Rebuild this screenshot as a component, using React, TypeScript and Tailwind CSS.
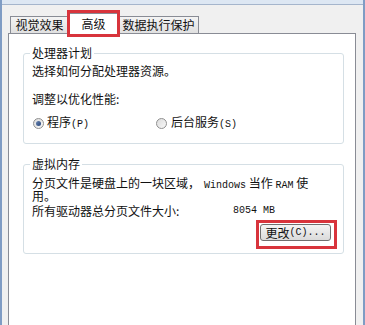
import React from "react";

const mono = "font-['Liberation_Mono',monospace] text-[10px]";

function Radio({ checked }: { checked?: boolean }) {
  return (
    <span className="flex h-[11px] w-[11px] items-center justify-center rounded-full border border-[#8f8f8f] bg-gradient-to-br from-[#dcdcdc] to-[#f8f8f8]">
      {checked && (
        <span className="h-[5px] w-[5px] rounded-full bg-gradient-to-br from-[#6b86b0] to-[#27457a]" />
      )}
    </span>
  );
}

function Tab({ label, active, width }: { label: string; active?: boolean; width: string }) {
  if (active) {
    return (
      <div className={`relative z-10 -mb-px flex h-[21px] items-start justify-center border border-b-0 border-[#898c95] bg-white pt-[2px] ${width}`}>
        {label}
        <span className="absolute -top-[4px] -right-[2px] -bottom-[3px] -left-[2px] border-[3px] border-[#d8343c]" />
      </div>
    );
  }
  return (
    <div className={`flex h-[17px] items-center justify-center border border-b-0 border-[#898c95] bg-gradient-to-b from-[#f4f4f4] to-[#e0e0e0] ${width}`}>
      {label}
    </div>
  );
}

export default function App() {
  return (
    <div className="flex h-[325px] w-[365px] flex-col overflow-hidden border-x-2 border-[#7f9cc4] bg-[#f0f0f0] font-['Noto_Sans_CJK_SC',sans-serif] text-[12px] leading-[16px] text-[#111]">
      <div className="h-[5px] border-b border-[#a5b5cc] bg-[#dde7f3]" />

      <div className="flex flex-1 flex-col pt-[8px] pr-[7px] pl-[6px]">
        <div className="flex h-[20px] items-end pl-[2px]">
          <Tab label="视觉效果" width="w-[59px]" />
          <Tab label="高级" active width="w-[51px] -ml-px" />
          <Tab label="数据执行保护" width="w-[81px] -ml-px" />
        </div>

        <div className="flex-1 border border-b-0 border-[#898c95] bg-white pt-[11px] pr-[11px] pl-[14px]">
          <fieldset className="rounded-[3px] border border-[#d5dfe5]">
            <legend className="ml-[6px] px-[2px]">处理器计划</legend>
            <div className="pt-[2px] pb-[10px] pl-[8px]">
              <div>选择如何分配处理器资源。</div>
              <div className="mt-[12px]">调整以优化性能:</div>
              <div className="mt-[7px] flex items-center">
                <div className="flex w-[124px] items-center">
                  <span className="ml-px">
                    <Radio checked />
                  </span>
                  <span className="ml-[3px]">
                    程序<span className={mono}>(P)</span>
                  </span>
                </div>
                <div className="flex items-center">
                  <Radio />
                  <span className="ml-[4px]">
                    后台服务<span className={mono}>(S)</span>
                  </span>
                </div>
              </div>
            </div>
          </fieldset>

          <fieldset className="mt-[12px] rounded-[3px] border border-[#d5dfe5]">
            <legend className="ml-[6px] px-[2px]">虚拟内存</legend>
            <div className="pt-[4px] pr-[12px] pb-[12px] pl-[8px]">
              <div className="leading-[13px]">
                分页文件是硬盘上的一块区域，<span className={`${mono} ml-[4px] leading-[0]`}>Windows</span> 当作{" "}
                <span className={`${mono} leading-[0]`}>RAM</span> 使
                <br />
                用。
              </div>
              <div className="mt-[1px] flex">
                <span className="w-[201px]">所有驱动器总分页文件大小:</span>
                <span className={mono}>8054 MB</span>
              </div>
              <div className="mt-[5px] flex justify-end">
                <div className="relative">
                  <button className="flex h-[17px] w-[71px] items-center justify-center rounded-[3px] border border-[#707070] bg-gradient-to-b from-[#f4f4f4] to-[#dadada] text-[12px] leading-[16px]">
                    更改<span className={mono}>(C)...</span>
                  </button>
                  <span className="absolute -top-[4px] -right-[6px] -bottom-[8px] -left-[4px] border-[3px] border-[#d8343c]" />
                </div>
              </div>
            </div>
          </fieldset>
        </div>
      </div>
    </div>
  );
}
